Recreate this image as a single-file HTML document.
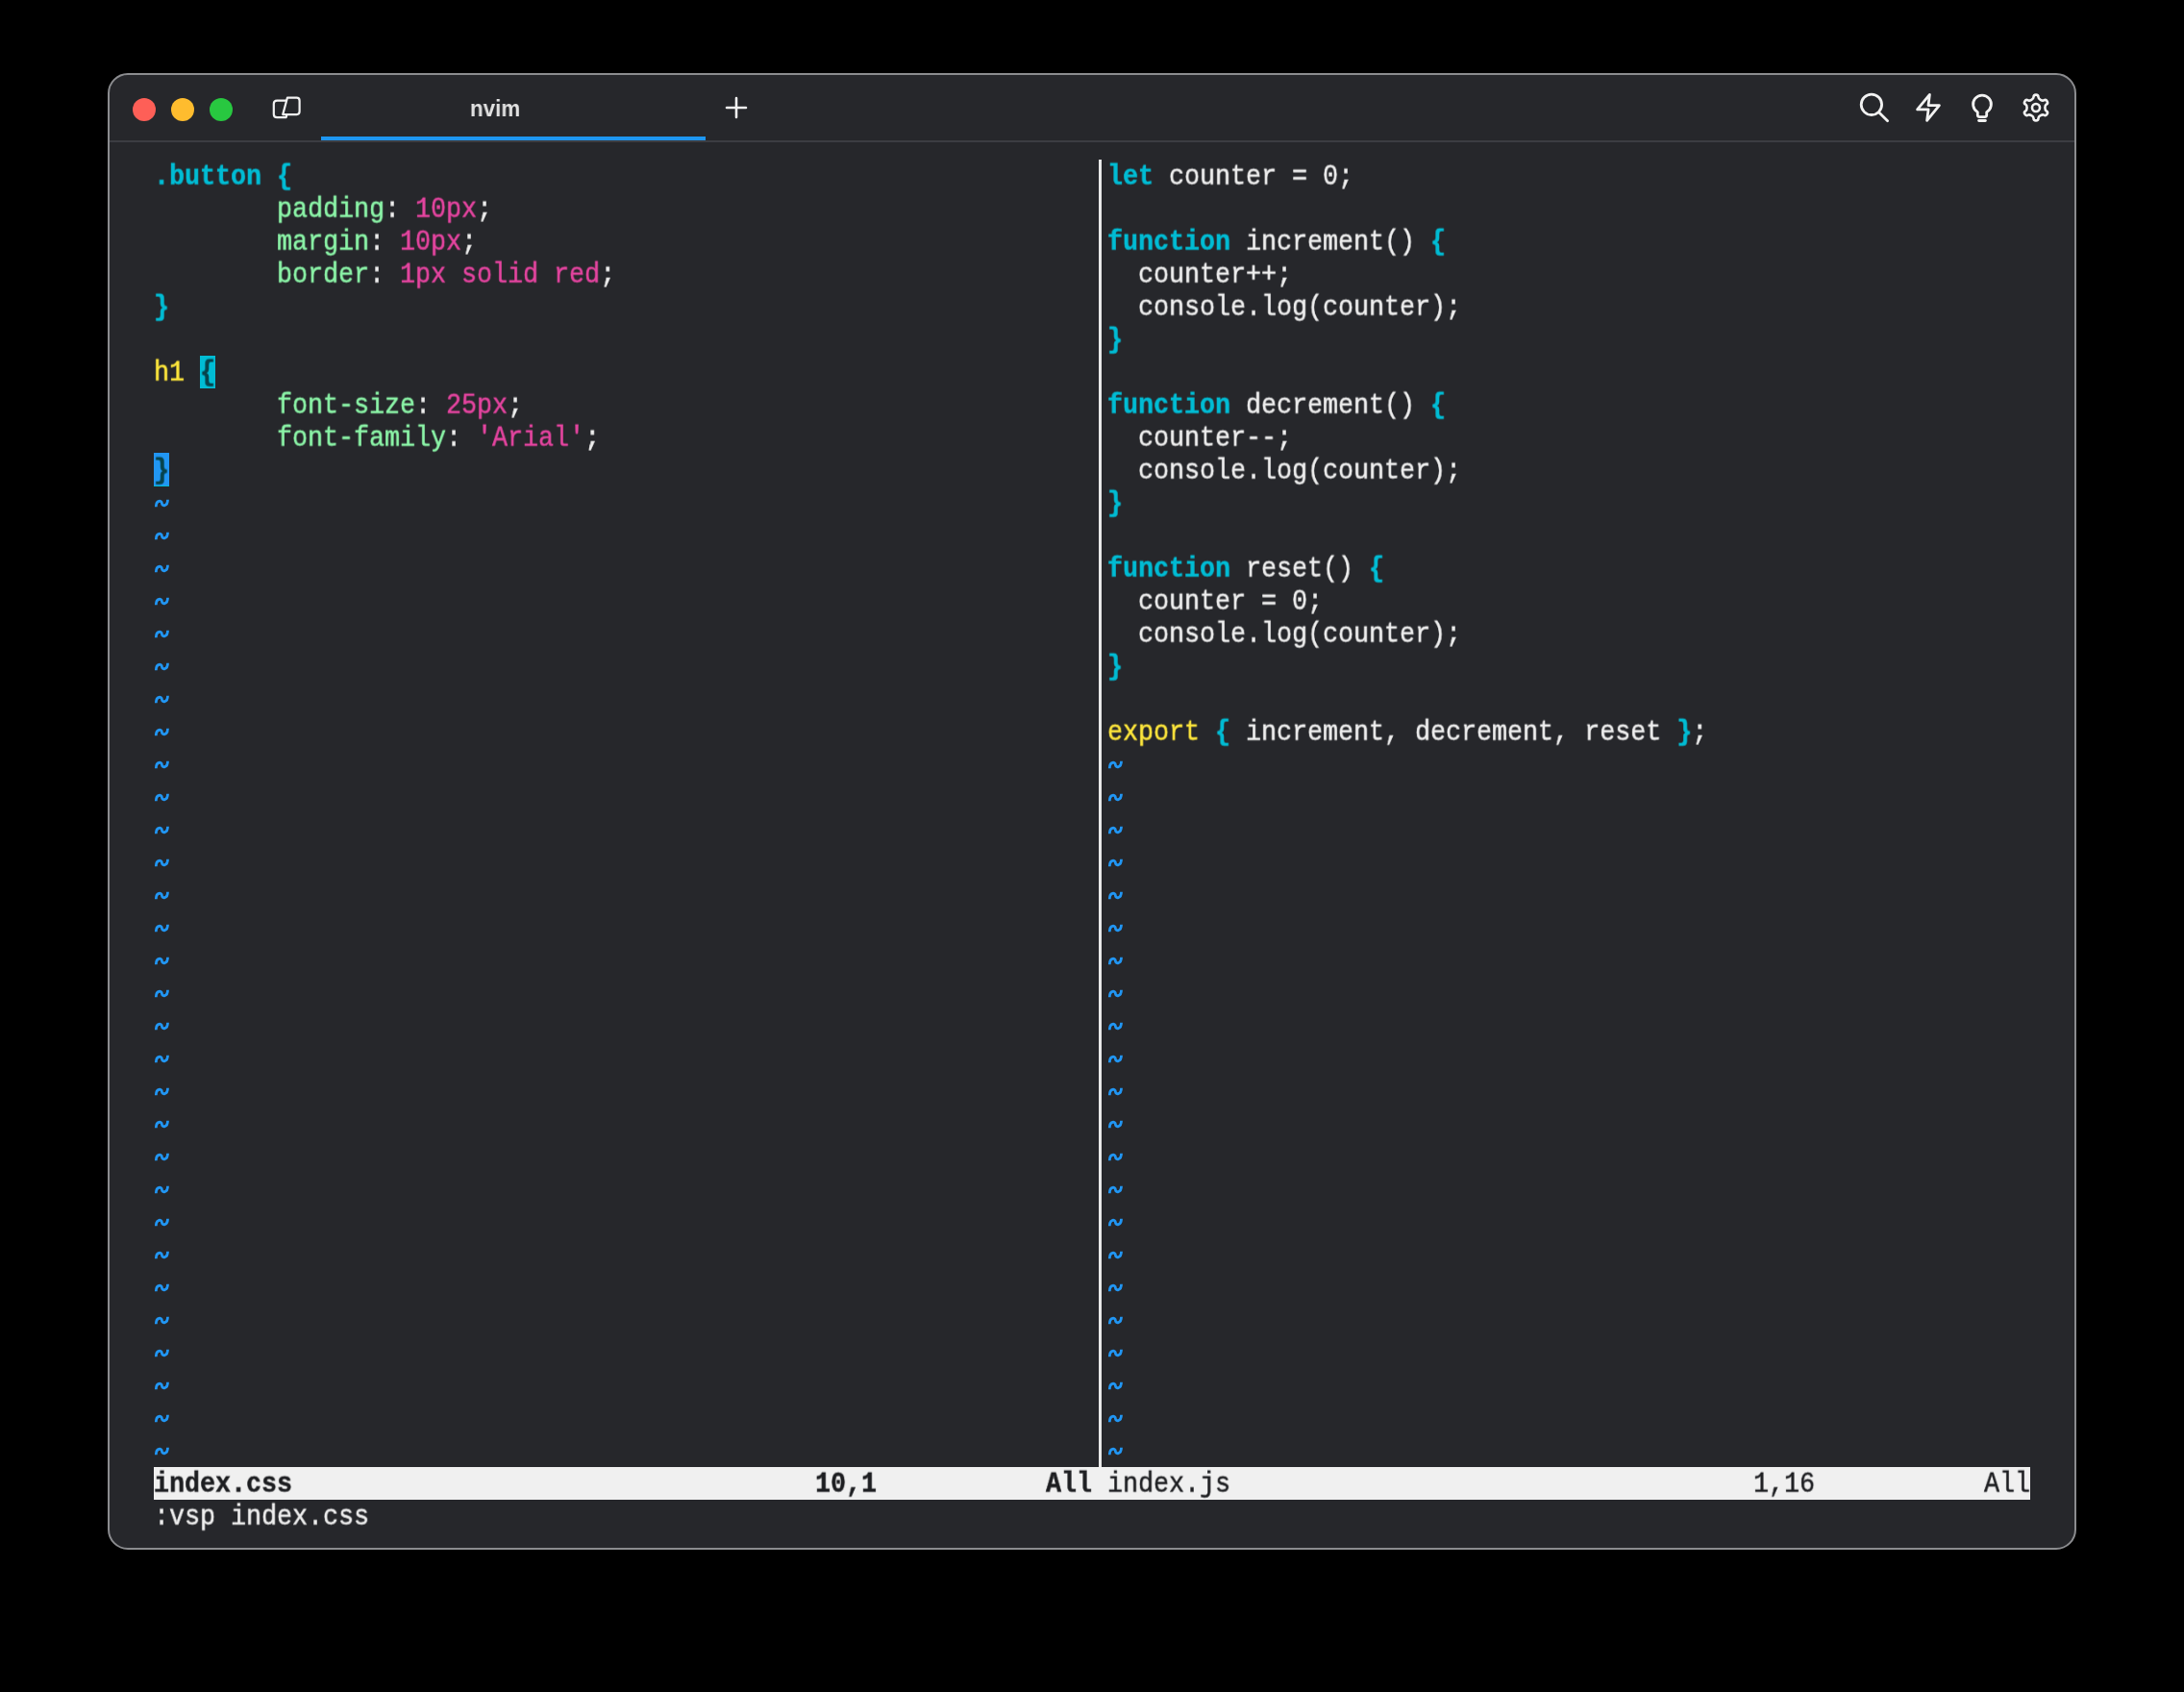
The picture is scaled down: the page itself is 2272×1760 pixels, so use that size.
<!DOCTYPE html>
<html><head><meta charset="utf-8"><style>
html,body{margin:0;padding:0;background:#000;width:2272px;height:1760px;overflow:hidden}
.win{position:absolute;left:112px;top:76px;width:2048px;height:1536px;box-sizing:border-box;border:2px solid #8b8c8f;border-radius:21px;background:#26272b}
.r{position:absolute;height:34px;line-height:34px;white-space:pre;font-family:"Liberation Mono",monospace;font-size:30px;transform-origin:0 0;transform:translateY(0.6px) scaleX(0.88889);-webkit-text-stroke:0.5px currentColor;will-change:transform}
.dot{position:absolute;width:24px;height:24px;border-radius:50%}
.title{position:absolute;font-family:"Liberation Sans",sans-serif;font-weight:bold;font-size:23.3px;color:#e2e2e2;white-space:pre;transform-origin:0 0;will-change:transform}
</style></head><body>
<div class="win"></div>
<div class="dot" style="left:138px;top:102px;background:#fe5f57"></div>
<div class="dot" style="left:178px;top:102px;background:#febc2e"></div>
<div class="dot" style="left:218px;top:102px;background:#28c840"></div>
<div style="position:absolute;left:114px;top:146px;width:2044px;height:2px;background:#3c3d42"></div>
<div style="position:absolute;left:334px;top:142px;width:400px;height:4px;background:#1e96f0"></div>
<div class="title" style="left:489px;top:100px;transform:scaleX(0.958)">nvim</div>

<svg width="2272" height="1760" style="position:absolute;left:0;top:0" fill="none" stroke="#f2f2f2" stroke-linecap="round" stroke-linejoin="round">
  <g stroke-width="2.2">
    <path d="M297.5 104.6 H288.2 Q284.8 104.6 284.8 108 V118.8 Q284.8 122.2 288.2 122.2 H297.6 L298.4 119.2"/>
    <path d="M298.9 101.7 H308.6 Q311.6 101.7 311.6 104.7 V116.1 Q311.6 119.1 308.6 119.1 H294.2 Z"/>
  </g>
  <path d="M766 102 V122 M756 112 H776" stroke-width="2.6"/>
  <g stroke-width="2.8">
    <circle cx="1946.9" cy="108.8" r="10.7"/>
    <path d="M1954.8 117 L1963.6 125.8"/>
    <path d="M2007.4 98.4 L1994.6 113.9 H2006.1 L2004.6 125.4 L2017.4 109.6 H2006 Z"/>
    <path d="M2057.3 116.6 A9.4 9.4 0 1 1 2066.7 116.6 V119.6 Q2066.7 121.6 2064.7 121.6 H2059.3 Q2057.3 121.6 2057.3 119.6 Z"/>
    <path d="M2058.6 125.5 H2065.4"/>
    <path d="M2115.50,101.10 A2.5 2.5 0 0 1 2120.50,101.10 C2120.50,103.10 2124.46,105.38 2126.19,104.38 A2.5 2.5 0 0 1 2128.69,108.72 C2126.96,109.72 2126.96,114.28 2128.69,115.28 A2.5 2.5 0 0 1 2126.19,119.62 C2124.46,118.62 2120.50,120.90 2120.50,122.90 A2.5 2.5 0 0 1 2115.50,122.90 C2115.50,120.90 2111.54,118.62 2109.81,119.62 A2.5 2.5 0 0 1 2107.31,115.28 C2109.04,114.28 2109.04,109.72 2107.31,108.72 A2.5 2.5 0 0 1 2109.81,104.38 C2111.54,105.38 2115.50,103.10 2115.50,101.10 Z" stroke-width="2.6"/>
    <circle cx="2118" cy="112" r="4.0" stroke-width="2.6"/>
  </g>
</svg>


<div style="position:absolute;left:208px;top:370px;width:16px;height:34px;background:#00bcd4"></div>
<div style="position:absolute;left:160px;top:471px;width:16px;height:34px;background:#2196f3"></div>
<div style="position:absolute;left:160px;top:505px;width:16px;height:1px;background:#00bcd4"></div>

<div style="position:absolute;left:1143px;top:166px;width:3px;height:1360px;background:#e8e8e8"></div>
<div class="r" style="left:160px;top:166px"><span style="color:#00bcd4;font-weight:bold">.button</span><span style="color:#efefef"> </span><span style="color:#00bcd4;font-weight:bold">{</span></div><div class="r" style="left:160px;top:200px"><span style="color:#efefef">        </span><span style="color:#8cf5a8">padding</span><span style="color:#efefef">: </span><span style="color:#e545a0">10px</span><span style="color:#efefef">;</span></div><div class="r" style="left:160px;top:234px"><span style="color:#efefef">        </span><span style="color:#8cf5a8">margin</span><span style="color:#efefef">: </span><span style="color:#e545a0">10px</span><span style="color:#efefef">;</span></div><div class="r" style="left:160px;top:268px"><span style="color:#efefef">        </span><span style="color:#8cf5a8">border</span><span style="color:#efefef">: </span><span style="color:#e545a0">1px solid red</span><span style="color:#efefef">;</span></div><div class="r" style="left:160px;top:302px"><span style="color:#00bcd4;font-weight:bold">}</span></div><div class="r" style="left:160px;top:370px"><span style="color:#fde63c">h1</span><span style="color:#efefef"> </span><span style="color:#07434c;font-weight:bold">{</span></div><div class="r" style="left:160px;top:404px"><span style="color:#efefef">        </span><span style="color:#8cf5a8">font-size</span><span style="color:#efefef">: </span><span style="color:#e545a0">25px</span><span style="color:#efefef">;</span></div><div class="r" style="left:160px;top:438px"><span style="color:#efefef">        </span><span style="color:#8cf5a8">font-family</span><span style="color:#efefef">: </span><span style="color:#e545a0">&#x27;Arial&#x27;</span><span style="color:#efefef">;</span></div><div class="r" style="left:160px;top:472px"><span style="color:#07434c;font-weight:bold">}</span></div><div class="r" style="left:1152px;top:166px"><span style="color:#00bcd4;font-weight:bold">let</span><span style="color:#efefef"> counter = 0;</span></div><div class="r" style="left:1152px;top:234px"><span style="color:#00bcd4;font-weight:bold">function</span><span style="color:#efefef"> increment() </span><span style="color:#00bcd4;font-weight:bold">{</span></div><div class="r" style="left:1152px;top:268px"><span style="color:#efefef">  counter++;</span></div><div class="r" style="left:1152px;top:302px"><span style="color:#efefef">  console.log(counter);</span></div><div class="r" style="left:1152px;top:336px"><span style="color:#00bcd4;font-weight:bold">}</span></div><div class="r" style="left:1152px;top:404px"><span style="color:#00bcd4;font-weight:bold">function</span><span style="color:#efefef"> decrement() </span><span style="color:#00bcd4;font-weight:bold">{</span></div><div class="r" style="left:1152px;top:438px"><span style="color:#efefef">  counter--;</span></div><div class="r" style="left:1152px;top:472px"><span style="color:#efefef">  console.log(counter);</span></div><div class="r" style="left:1152px;top:506px"><span style="color:#00bcd4;font-weight:bold">}</span></div><div class="r" style="left:1152px;top:574px"><span style="color:#00bcd4;font-weight:bold">function</span><span style="color:#efefef"> reset() </span><span style="color:#00bcd4;font-weight:bold">{</span></div><div class="r" style="left:1152px;top:608px"><span style="color:#efefef">  counter = 0;</span></div><div class="r" style="left:1152px;top:642px"><span style="color:#efefef">  console.log(counter);</span></div><div class="r" style="left:1152px;top:676px"><span style="color:#00bcd4;font-weight:bold">}</span></div><div class="r" style="left:1152px;top:744px"><span style="color:#fde63c">export</span><span style="color:#efefef"> </span><span style="color:#00bcd4;font-weight:bold">{</span><span style="color:#efefef"> increment, decrement, reset </span><span style="color:#00bcd4;font-weight:bold">}</span><span style="color:#efefef">;</span></div>
<svg width="2272" height="1760" style="position:absolute;left:0;top:0"><path d="M162.30 527.20 C162.30 519.90 168.40 520.20 168.40 523.50 C168.40 526.80 174.50 527.10 174.50 519.80 M162.30 561.20 C162.30 553.90 168.40 554.20 168.40 557.50 C168.40 560.80 174.50 561.10 174.50 553.80 M162.30 595.20 C162.30 587.90 168.40 588.20 168.40 591.50 C168.40 594.80 174.50 595.10 174.50 587.80 M162.30 629.20 C162.30 621.90 168.40 622.20 168.40 625.50 C168.40 628.80 174.50 629.10 174.50 621.80 M162.30 663.20 C162.30 655.90 168.40 656.20 168.40 659.50 C168.40 662.80 174.50 663.10 174.50 655.80 M162.30 697.20 C162.30 689.90 168.40 690.20 168.40 693.50 C168.40 696.80 174.50 697.10 174.50 689.80 M162.30 731.20 C162.30 723.90 168.40 724.20 168.40 727.50 C168.40 730.80 174.50 731.10 174.50 723.80 M162.30 765.20 C162.30 757.90 168.40 758.20 168.40 761.50 C168.40 764.80 174.50 765.10 174.50 757.80 M162.30 799.20 C162.30 791.90 168.40 792.20 168.40 795.50 C168.40 798.80 174.50 799.10 174.50 791.80 M162.30 833.20 C162.30 825.90 168.40 826.20 168.40 829.50 C168.40 832.80 174.50 833.10 174.50 825.80 M162.30 867.20 C162.30 859.90 168.40 860.20 168.40 863.50 C168.40 866.80 174.50 867.10 174.50 859.80 M162.30 901.20 C162.30 893.90 168.40 894.20 168.40 897.50 C168.40 900.80 174.50 901.10 174.50 893.80 M162.30 935.20 C162.30 927.90 168.40 928.20 168.40 931.50 C168.40 934.80 174.50 935.10 174.50 927.80 M162.30 969.20 C162.30 961.90 168.40 962.20 168.40 965.50 C168.40 968.80 174.50 969.10 174.50 961.80 M162.30 1003.20 C162.30 995.90 168.40 996.20 168.40 999.50 C168.40 1002.80 174.50 1003.10 174.50 995.80 M162.30 1037.20 C162.30 1029.90 168.40 1030.20 168.40 1033.50 C168.40 1036.80 174.50 1037.10 174.50 1029.80 M162.30 1071.20 C162.30 1063.90 168.40 1064.20 168.40 1067.50 C168.40 1070.80 174.50 1071.10 174.50 1063.80 M162.30 1105.20 C162.30 1097.90 168.40 1098.20 168.40 1101.50 C168.40 1104.80 174.50 1105.10 174.50 1097.80 M162.30 1139.20 C162.30 1131.90 168.40 1132.20 168.40 1135.50 C168.40 1138.80 174.50 1139.10 174.50 1131.80 M162.30 1173.20 C162.30 1165.90 168.40 1166.20 168.40 1169.50 C168.40 1172.80 174.50 1173.10 174.50 1165.80 M162.30 1207.20 C162.30 1199.90 168.40 1200.20 168.40 1203.50 C168.40 1206.80 174.50 1207.10 174.50 1199.80 M162.30 1241.20 C162.30 1233.90 168.40 1234.20 168.40 1237.50 C168.40 1240.80 174.50 1241.10 174.50 1233.80 M162.30 1275.20 C162.30 1267.90 168.40 1268.20 168.40 1271.50 C168.40 1274.80 174.50 1275.10 174.50 1267.80 M162.30 1309.20 C162.30 1301.90 168.40 1302.20 168.40 1305.50 C168.40 1308.80 174.50 1309.10 174.50 1301.80 M162.30 1343.20 C162.30 1335.90 168.40 1336.20 168.40 1339.50 C168.40 1342.80 174.50 1343.10 174.50 1335.80 M162.30 1377.20 C162.30 1369.90 168.40 1370.20 168.40 1373.50 C168.40 1376.80 174.50 1377.10 174.50 1369.80 M162.30 1411.20 C162.30 1403.90 168.40 1404.20 168.40 1407.50 C168.40 1410.80 174.50 1411.10 174.50 1403.80 M162.30 1445.20 C162.30 1437.90 168.40 1438.20 168.40 1441.50 C168.40 1444.80 174.50 1445.10 174.50 1437.80 M162.30 1479.20 C162.30 1471.90 168.40 1472.20 168.40 1475.50 C168.40 1478.80 174.50 1479.10 174.50 1471.80 M162.30 1513.20 C162.30 1505.90 168.40 1506.20 168.40 1509.50 C168.40 1512.80 174.50 1513.10 174.50 1505.80 M1154.30 799.20 C1154.30 791.90 1160.40 792.20 1160.40 795.50 C1160.40 798.80 1166.50 799.10 1166.50 791.80 M1154.30 833.20 C1154.30 825.90 1160.40 826.20 1160.40 829.50 C1160.40 832.80 1166.50 833.10 1166.50 825.80 M1154.30 867.20 C1154.30 859.90 1160.40 860.20 1160.40 863.50 C1160.40 866.80 1166.50 867.10 1166.50 859.80 M1154.30 901.20 C1154.30 893.90 1160.40 894.20 1160.40 897.50 C1160.40 900.80 1166.50 901.10 1166.50 893.80 M1154.30 935.20 C1154.30 927.90 1160.40 928.20 1160.40 931.50 C1160.40 934.80 1166.50 935.10 1166.50 927.80 M1154.30 969.20 C1154.30 961.90 1160.40 962.20 1160.40 965.50 C1160.40 968.80 1166.50 969.10 1166.50 961.80 M1154.30 1003.20 C1154.30 995.90 1160.40 996.20 1160.40 999.50 C1160.40 1002.80 1166.50 1003.10 1166.50 995.80 M1154.30 1037.20 C1154.30 1029.90 1160.40 1030.20 1160.40 1033.50 C1160.40 1036.80 1166.50 1037.10 1166.50 1029.80 M1154.30 1071.20 C1154.30 1063.90 1160.40 1064.20 1160.40 1067.50 C1160.40 1070.80 1166.50 1071.10 1166.50 1063.80 M1154.30 1105.20 C1154.30 1097.90 1160.40 1098.20 1160.40 1101.50 C1160.40 1104.80 1166.50 1105.10 1166.50 1097.80 M1154.30 1139.20 C1154.30 1131.90 1160.40 1132.20 1160.40 1135.50 C1160.40 1138.80 1166.50 1139.10 1166.50 1131.80 M1154.30 1173.20 C1154.30 1165.90 1160.40 1166.20 1160.40 1169.50 C1160.40 1172.80 1166.50 1173.10 1166.50 1165.80 M1154.30 1207.20 C1154.30 1199.90 1160.40 1200.20 1160.40 1203.50 C1160.40 1206.80 1166.50 1207.10 1166.50 1199.80 M1154.30 1241.20 C1154.30 1233.90 1160.40 1234.20 1160.40 1237.50 C1160.40 1240.80 1166.50 1241.10 1166.50 1233.80 M1154.30 1275.20 C1154.30 1267.90 1160.40 1268.20 1160.40 1271.50 C1160.40 1274.80 1166.50 1275.10 1166.50 1267.80 M1154.30 1309.20 C1154.30 1301.90 1160.40 1302.20 1160.40 1305.50 C1160.40 1308.80 1166.50 1309.10 1166.50 1301.80 M1154.30 1343.20 C1154.30 1335.90 1160.40 1336.20 1160.40 1339.50 C1160.40 1342.80 1166.50 1343.10 1166.50 1335.80 M1154.30 1377.20 C1154.30 1369.90 1160.40 1370.20 1160.40 1373.50 C1160.40 1376.80 1166.50 1377.10 1166.50 1369.80 M1154.30 1411.20 C1154.30 1403.90 1160.40 1404.20 1160.40 1407.50 C1160.40 1410.80 1166.50 1411.10 1166.50 1403.80 M1154.30 1445.20 C1154.30 1437.90 1160.40 1438.20 1160.40 1441.50 C1160.40 1444.80 1166.50 1445.10 1166.50 1437.80 M1154.30 1479.20 C1154.30 1471.90 1160.40 1472.20 1160.40 1475.50 C1160.40 1478.80 1166.50 1479.10 1166.50 1471.80 M1154.30 1513.20 C1154.30 1505.90 1160.40 1506.20 1160.40 1509.50 C1160.40 1512.80 1166.50 1513.10 1166.50 1505.80" fill="none" stroke="#2196f3" stroke-width="2.8"/></svg>
<div style="position:absolute;left:160px;top:1526px;width:1952px;height:34px;background:#f0f0f0"></div><div class="r" style="left:160px;top:1526px"><span style="color:#1d1e21;font-weight:bold">index.css</span></div><div class="r" style="left:848px;top:1526px"><span style="color:#1d1e21;font-weight:bold">10,1</span></div><div class="r" style="left:1088px;top:1526px"><span style="color:#1d1e21;font-weight:bold">All</span></div><div class="r" style="left:1152px;top:1526px"><span style="color:#1d1e21">index.js</span></div><div class="r" style="left:1824px;top:1526px"><span style="color:#1d1e21">1,16</span></div><div class="r" style="left:2064px;top:1526px"><span style="color:#1d1e21">All</span></div><div class="r" style="left:160px;top:1560px"><span style="color:#efefef">:vsp index.css</span></div>
</body></html>
